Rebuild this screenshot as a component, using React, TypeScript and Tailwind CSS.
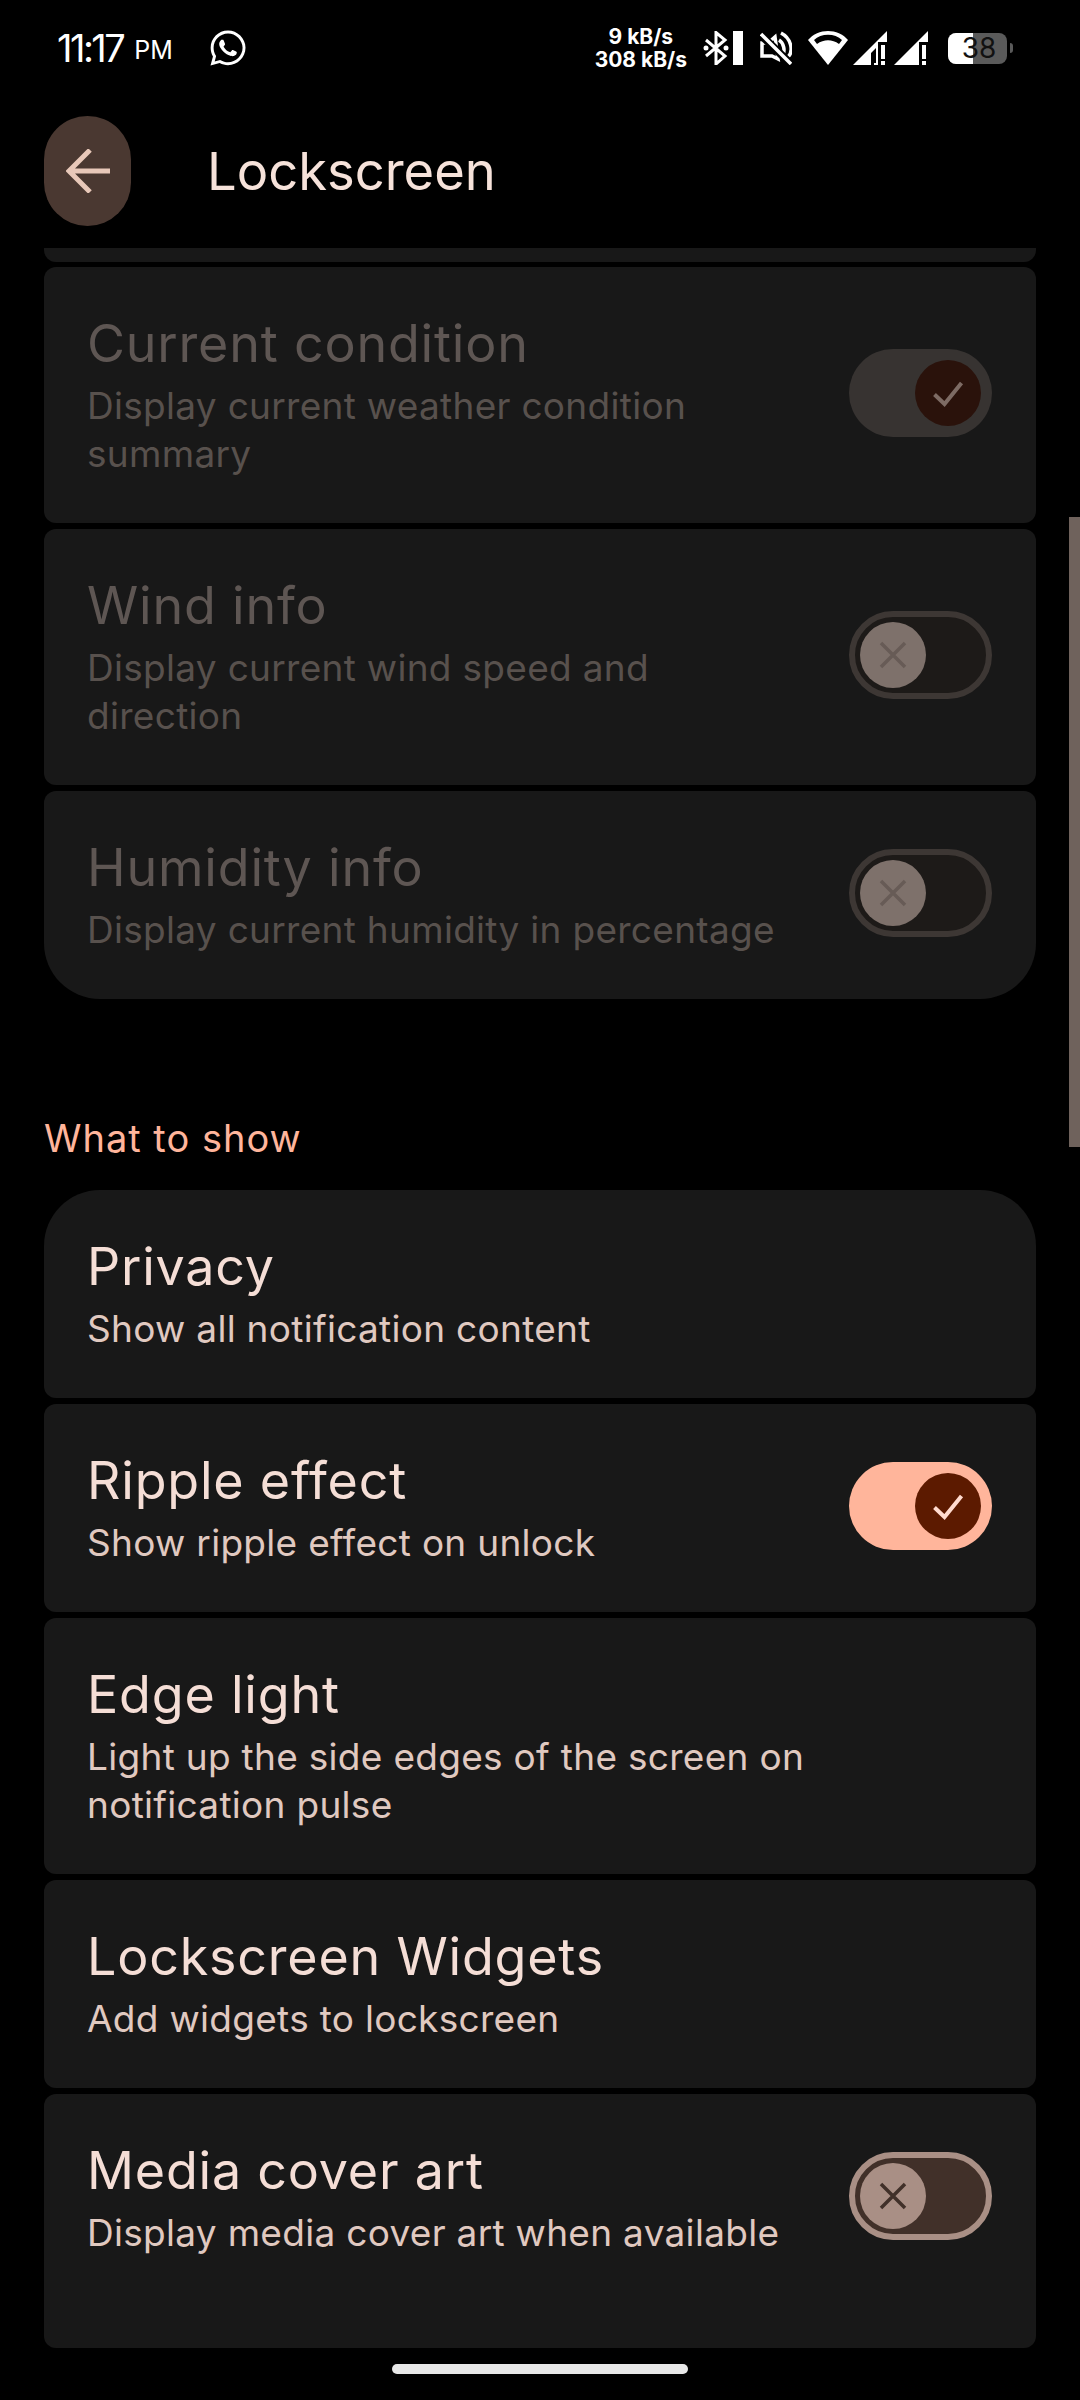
import { FaWhatsapp } from 'react-icons/fa';

type Row = {
  title: string;
  summary: string[];
  toggle?: 'on' | 'off';
  radius: string;
  bottom?: string;
};

const FONT = "font-['Inter','Noto_Sans',sans-serif]";

const disabledRows: Row[] = [
  {
    title: 'Current condition',
    summary: ['Display current weather condition', 'summary'],
    toggle: 'on',
    radius: 'rounded-[12px]',
  },
  {
    title: 'Wind info',
    summary: ['Display current wind speed and', 'direction'],
    toggle: 'off',
    radius: 'rounded-[12px]',
  },
  {
    title: 'Humidity info',
    summary: ['Display current humidity in percentage'],
    toggle: 'off',
    radius: 'rounded-t-[12px] rounded-b-[56px]',
  },
];

const rows: Row[] = [
  {
    title: 'Privacy',
    summary: ['Show all notification content'],
    radius: 'rounded-t-[56px] rounded-b-[12px]',
  },
  {
    title: 'Ripple effect',
    summary: ['Show ripple effect on unlock'],
    toggle: 'on',
    radius: 'rounded-[12px]',
  },
  {
    title: 'Edge light',
    summary: ['Light up the side edges of the screen on', 'notification pulse'],
    radius: 'rounded-[12px]',
  },
  {
    title: 'Lockscreen Widgets',
    summary: ['Add widgets to lockscreen'],
    radius: 'rounded-[12px]',
  },
  {
    title: 'Media cover art',
    summary: ['Display media cover art when available'],
    toggle: 'off',
    radius: 'rounded-[12px]',
    bottom: 'pb-[91px]',
  },
];

function Toggle({ state, disabled }: { state: 'on' | 'off'; disabled?: boolean }) {
  if (state === 'on') {
    return (
      <div
        className={`mb-[6px] flex h-[88px] w-[143px] shrink-0 items-center justify-end rounded-full pr-[11px] ${
          disabled ? 'bg-[#373331]' : 'bg-[#ffb59b]'
        }`}
      >
        <div
          className={`flex h-[66px] w-[66px] items-center justify-center rounded-full ${
            disabled ? 'bg-[#2a120b]' : 'bg-[#5c1a00]'
          }`}
        >
          <svg width="66" height="66" viewBox="0 0 66 66" fill="none">
            <path
              d="M19.5 34.5 L29.5 44 L46.5 23"
              stroke={disabled ? '#7d6b64' : '#ffdbcf'}
              strokeWidth="4"
            />
          </svg>
        </div>
      </div>
    );
  }
  return (
    <div
      className={`mb-[6px] flex h-[88px] w-[143px] shrink-0 items-center rounded-full border-[6px] pl-[5px] ${
        disabled ? 'border-[#3d3734] bg-[#1d1a18]' : 'border-[#a98f85] bg-[#413029]'
      }`}
    >
      <div
        className={`flex h-[66px] w-[66px] items-center justify-center rounded-full ${
          disabled ? 'bg-[#7e716b]' : 'bg-[#a98f85]'
        }`}
      >
        <svg width="66" height="66" viewBox="0 0 66 66" fill="none">
          <path
            d="M21 21 L45 45 M45 21 L21 45"
            stroke={disabled ? '#675b56' : '#413029'}
            strokeWidth="3.5"
          />
        </svg>
      </div>
    </div>
  );
}

function Card({ row, disabled }: { row: Row; disabled?: boolean }) {
  return (
    <div className={`bg-[#181818] pt-[46px] pl-[43px] pr-[44px] ${row.bottom ?? 'pb-[45px]'} ${row.radius}`}>
      <div className="flex items-center justify-between">
        <div>
          <div
            className={`h-[62px] text-[52px] leading-[62px] tracking-[0.8px] ${
              disabled ? 'text-[#5e5653]' : 'text-[#f5ded6]'
            }`}
          >
            {row.title}
          </div>
          <div
            className={`mt-[7px] text-[37px] leading-[48px] tracking-[0.3px] ${
              disabled ? 'text-[#58514d]' : 'text-[#e0c9c0]'
            }`}
          >
            {row.summary.map((line) => (
              <div key={line}>{line}</div>
            ))}
          </div>
        </div>
        {row.toggle ? <Toggle state={row.toggle} disabled={disabled} /> : null}
      </div>
    </div>
  );
}

function StatusIcons() {
  return (
    <div className="flex items-center">
      <div className="mr-[16px] flex flex-col items-center text-[21px] font-bold leading-[23px] text-white">
        <span>9 kB/s</span>
        <span>308 kB/s</span>
      </div>
      {/* bluetooth + battery bar */}
      <svg width="40" height="34" viewBox="0 0 40 34" fill="none" className="mr-[17px]">
        <path d="M3 9 L22 25 L13 33 V1.5 L22 9 L3 25" stroke="#fff" strokeWidth="3" />
        <circle cx="3" cy="17" r="2.5" fill="#fff" />
        <circle cx="23" cy="17" r="2.5" fill="#fff" />
        <rect x="30" y="0" width="10" height="34" fill="#fff" />
      </svg>
      {/* mute */}
      <svg width="32" height="34" viewBox="0 0 32 34" fill="none" className="mr-[16px]">
        <path d="M2 12 H8 L15 6 L18 28 L12 25 H2 Z" stroke="#fff" strokeWidth="3.5" />
        <path d="M19 9 C24 12 25 20 23 23 M21 2 C31 7 34 20 28 26" stroke="#fff" strokeWidth="3.5" />
        <path d="M0 3 L31 33" stroke="#000" strokeWidth="8" />
        <path d="M1 3 L31 33" stroke="#fff" strokeWidth="3.5" />
      </svg>
      {/* wifi */}
      <svg width="40" height="34" viewBox="0 0 40 34" className="mr-[5px]">
        <path d="M0 9 C10 -3 30 -3 40 9 L20 34 Z" fill="#fff" />
        <path d="M6 9 C13 2 27 2 34 9 L31 13 C24 8 16 8 9 13 Z" fill="#000" />
      </svg>
      {/* signal 1 */}
      <svg width="34" height="34" viewBox="0 0 34 34" className="mr-[7px]">
        <path d="M0 34 L34 0 V11 H25 V34 Z" fill="#fff" />
        <path d="M18 34 V22 L23 17 V32 H21 V34 Z" fill="#000" />
        <rect x="28" y="14" width="4" height="14" fill="#fff" />
        <rect x="28" y="30" width="4" height="4" fill="#fff" />
      </svg>
      {/* signal 2 */}
      <svg width="34" height="34" viewBox="0 0 34 34" className="mr-[20px]">
        <path d="M0 34 L34 0 V11 H25 V34 Z" fill="#fff" />
        <rect x="28" y="14" width="4" height="14" fill="#fff" />
        <rect x="28" y="30" width="4" height="4" fill="#fff" />
      </svg>
      {/* battery */}
      <div className="relative mr-[3px] flex h-[31px] w-[59px] overflow-hidden rounded-[8px] bg-[#5a5a5a]">
        <div className="h-full w-[25px] bg-white" />
        <span className="absolute inset-0 flex items-center justify-center pl-[3px] text-[28px] leading-none text-[#111]">
          38
        </span>
      </div>
      <div className="h-[10px] w-[3px] rounded-r-full bg-[#5a5a5a]" />
    </div>
  );
}

export default function App() {
  return (
    <div className={`relative h-[2400px] w-[1080px] overflow-hidden bg-black ${FONT}`}>
      <div className="flex h-[96px] items-center justify-between pl-[57px] pr-[67px]">
        <div className="flex items-center text-white">
          <span className="text-[38px] tracking-[-2.5px]">11:17</span>
          <span className="ml-[11px] mt-[6px] text-[25px]">PM</span>
          <FaWhatsapp className="ml-[35px] h-[40px] w-[40px]" />
        </div>
        <StatusIcons />
      </div>

      <div className="mt-[20px] flex h-[110px] items-center px-[44px]">
        <div className="flex h-[110px] w-[87px] items-center justify-center rounded-full bg-[#4a3831]">
          <svg width="44" height="44" viewBox="0 0 44 44" fill="none">
            <path d="M44 22 H3 M24 1 L3 22 L24 43" stroke="#e8c8b9" strokeWidth="5" />
          </svg>
        </div>
        <h1 className="ml-[76px] text-[52.5px] font-normal text-[#f6e2da]">Lockscreen</h1>
      </div>

      <div className="mt-[22px] px-[44px]">
        <div className="h-[14px] rounded-b-[12px] bg-[#181818]" />
        <div className="mt-[5px] flex flex-col gap-[6px]">
          {disabledRows.map((row) => (
            <Card key={row.title} row={row} disabled />
          ))}
        </div>

        <div className="mt-[117px] h-[74px] text-[38px] leading-[44px] tracking-[1px] text-[#ffb59b]">What to show</div>

        <div className="flex flex-col gap-[6px]">
          {rows.map((row) => (
            <Card key={row.title} row={row} />
          ))}
        </div>
      </div>

      <div className="mx-auto mt-[16px] h-[10px] w-[296px] rounded-full bg-[#e8e8e8]" />

      {/* overlay scrollbar */}
      <div className="absolute right-0 top-[517px] h-[630px] w-[11px] bg-[#6f625c]" />
    </div>
  );
}
